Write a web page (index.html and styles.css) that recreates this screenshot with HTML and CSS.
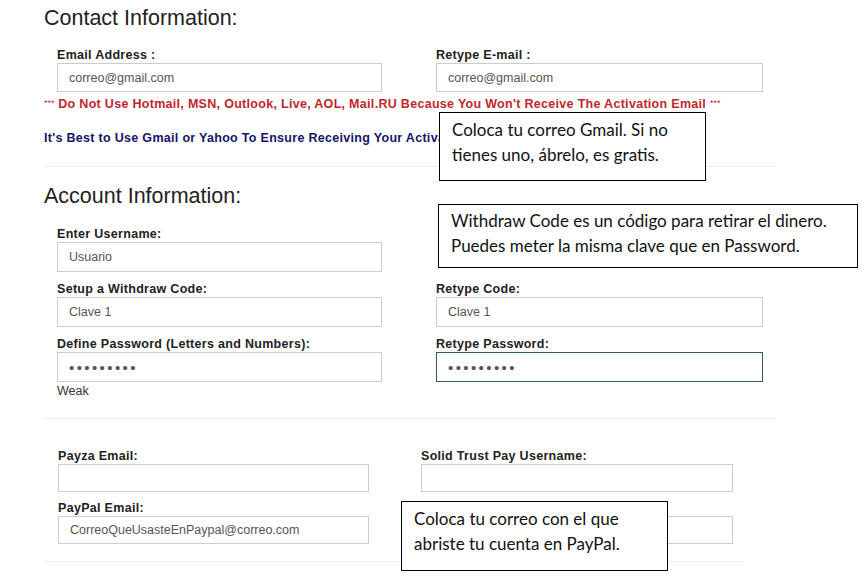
FILE: index.html
```html
<!DOCTYPE html>
<html lang="en">
<head>
    <meta charset="UTF-8">
    <title>Register</title>
    <link rel="stylesheet" href="styles.css">
</head>
<body>
    <div class="page">
        <section class="block contact">
            <h2>Contact Information:</h2>
            <div class="grid">
                <div class="field">
                    <label for="email">Email Address :</label>
                    <input type="text" id="email" value="correo@gmail.com">
                </div>
                <div class="field">
                    <label for="email2">Retype E-mail :</label>
                    <input type="text" id="email2" value="correo@gmail.com">
                </div>
            </div>
            <p class="warn"><span class="stars">***</span> Do Not Use Hotmail, MSN, Outlook, Live, AOL, Mail.RU Because You Won't Receive The Activation Email <span class="stars">***</span></p>
            <p class="tip">It's Best to Use Gmail or Yahoo To Ensure Receiving Your Activation Email</p>
        </section>

        <hr class="sep">

        <section class="block account">
            <h2>Account Information:</h2>
            <div class="grid">
                <div class="field">
                    <label for="user">Enter Username:</label>
                    <input type="text" id="user" value="Usuario">
                </div>
                <div class="field"></div>
                <div class="field">
                    <label for="code">Setup a Withdraw Code:</label>
                    <input type="text" id="code" value="Clave 1">
                </div>
                <div class="field">
                    <label for="code2">Retype Code:</label>
                    <input type="text" id="code2" value="Clave 1">
                </div>
                <div class="field">
                    <label for="pass">Define Password (Letters and Numbers):</label>
                    <input type="password" id="pass" value="clave1234">
                    <span class="strength">Weak</span>
                </div>
                <div class="field">
                    <label for="pass2">Retype Password:</label>
                    <input type="password" id="pass2" class="focused" value="clave1234">
                </div>
            </div>
        </section>

        <hr class="sep">

        <section class="block payment">
            <div class="grid">
                <div class="field">
                    <label for="payza">Payza Email:</label>
                    <input type="text" id="payza">
                </div>
                <div class="field">
                    <label for="stp">Solid Trust Pay Username:</label>
                    <input type="text" id="stp">
                </div>
                <div class="field">
                    <label for="paypal">PayPal Email:</label>
                    <input type="text" id="paypal" value="CorreoQueUsasteEnPaypal@correo.com">
                </div>
                <div class="field">
                    <label for="other">&nbsp;</label>
                    <input type="text" id="other">
                </div>
            </div>
        </section>

        <hr class="sep short">

        <!-- help notes laid over the form -->
        <div class="note note-gmail">Coloca tu correo Gmail. Si no<br>tienes uno, ábrelo, es gratis.</div>
        <div class="note note-code">Withdraw Code es un código para retirar el dinero.<br>Puedes meter la misma clave que en Password.</div>
        <div class="note note-paypal">Coloca tu correo con el que<br>abriste tu cuenta en PayPal.</div>
    </div>
</body>
</html>
```

FILE: styles.css
```css
* {
    margin: 0;
    padding: 0;
    box-sizing: border-box;
}

body {
    font-family: "Liberation Sans", Arial, sans-serif;
    background: #fff;
    color: #222;
    overflow: hidden;
}

.page {
    position: relative;
    width: 868px;
    height: 580px;
    padding: 6px 0 0 44px;
}

h2 {
    font-size: 21.5px;
    line-height: 24px;
    font-weight: normal;
    color: #222;
}

.grid {
    display: grid;
    grid-template-columns: 325px 327px;
    column-gap: 54px;
    padding-left: 13px;
}

.field {
    display: flex;
    flex-direction: column;
    margin-bottom: 10px;
}

label {
    font-size: 12.5px;
    line-height: 14px;
    font-weight: bold;
    letter-spacing: 0.3px;
    color: #222;
    margin-bottom: 1px;
}

input {
    height: 30px;
    border: 1px solid #ccc;
    padding: 0 11px;
    font-family: "Liberation Sans", Arial, sans-serif;
    font-size: 12.5px;
    color: #555;
    background: #fff;
    outline: none;
}

input[type="password"] {
    letter-spacing: 2.4px;
    font-size: 15px;
    color: #555;
}

input.focused {
    border-color: #2c5e50;
}

.strength {
    font-size: 12.5px;
    line-height: 14px;
    margin-top: 2px;
    color: #333;
}

/* contact block */
.contact .grid {
    margin-top: 18px;
}

.contact .field {
    margin-bottom: 0;
}

.contact input {
    height: 29px;
}

.warn,
.tip {
    font-size: 12.5px;
    line-height: 15px;
    font-weight: bold;
    letter-spacing: 0.3px;
}

.warn {
    margin-top: 4px;
    color: #c1272d;
}

.warn .stars {
    font-weight: normal;
    font-size: 9px;
    letter-spacing: 0;
    vertical-align: 2px;
}

.tip {
    margin-top: 19px;
    color: #15156a;
}

.sep {
    border: 0;
    border-top: 1px solid #eee;
    width: 732px;
    margin-top: 20px;
}

.sep.short {
    width: 699px;
    margin-top: 8px;
}

.account h2 {
    margin-top: 17px;
}

.account .grid {
    margin-top: 19px;
}

.account .field:last-child,
.account .field:nth-child(5) {
    margin-bottom: 0;
}

/* payment block */
.payment .grid {
    margin-top: 30px;
    grid-template-columns: 311px 312px;
    column-gap: 52px;
    padding-left: 14px;
}

.payment .field {
    margin-bottom: 9px;
}

.payment input {
    height: 28px;
}

/* help notes */
.note {
    position: absolute;
    background: #fff;
    border: 1px solid #000;
    font-family: Lato, "Noto Sans", sans-serif;
    font-size: 17px;
    line-height: 25px;
    color: #111;
    padding: 4px 12px;
}

.note-gmail {
    left: 439px;
    top: 112px;
    width: 267px;
    height: 69px;
}

.note-code {
    left: 438px;
    top: 204px;
    width: 420px;
    height: 64px;
    padding-top: 3px;
}

.note-paypal {
    left: 401px;
    top: 501px;
    width: 267px;
    height: 70px;
}
```
